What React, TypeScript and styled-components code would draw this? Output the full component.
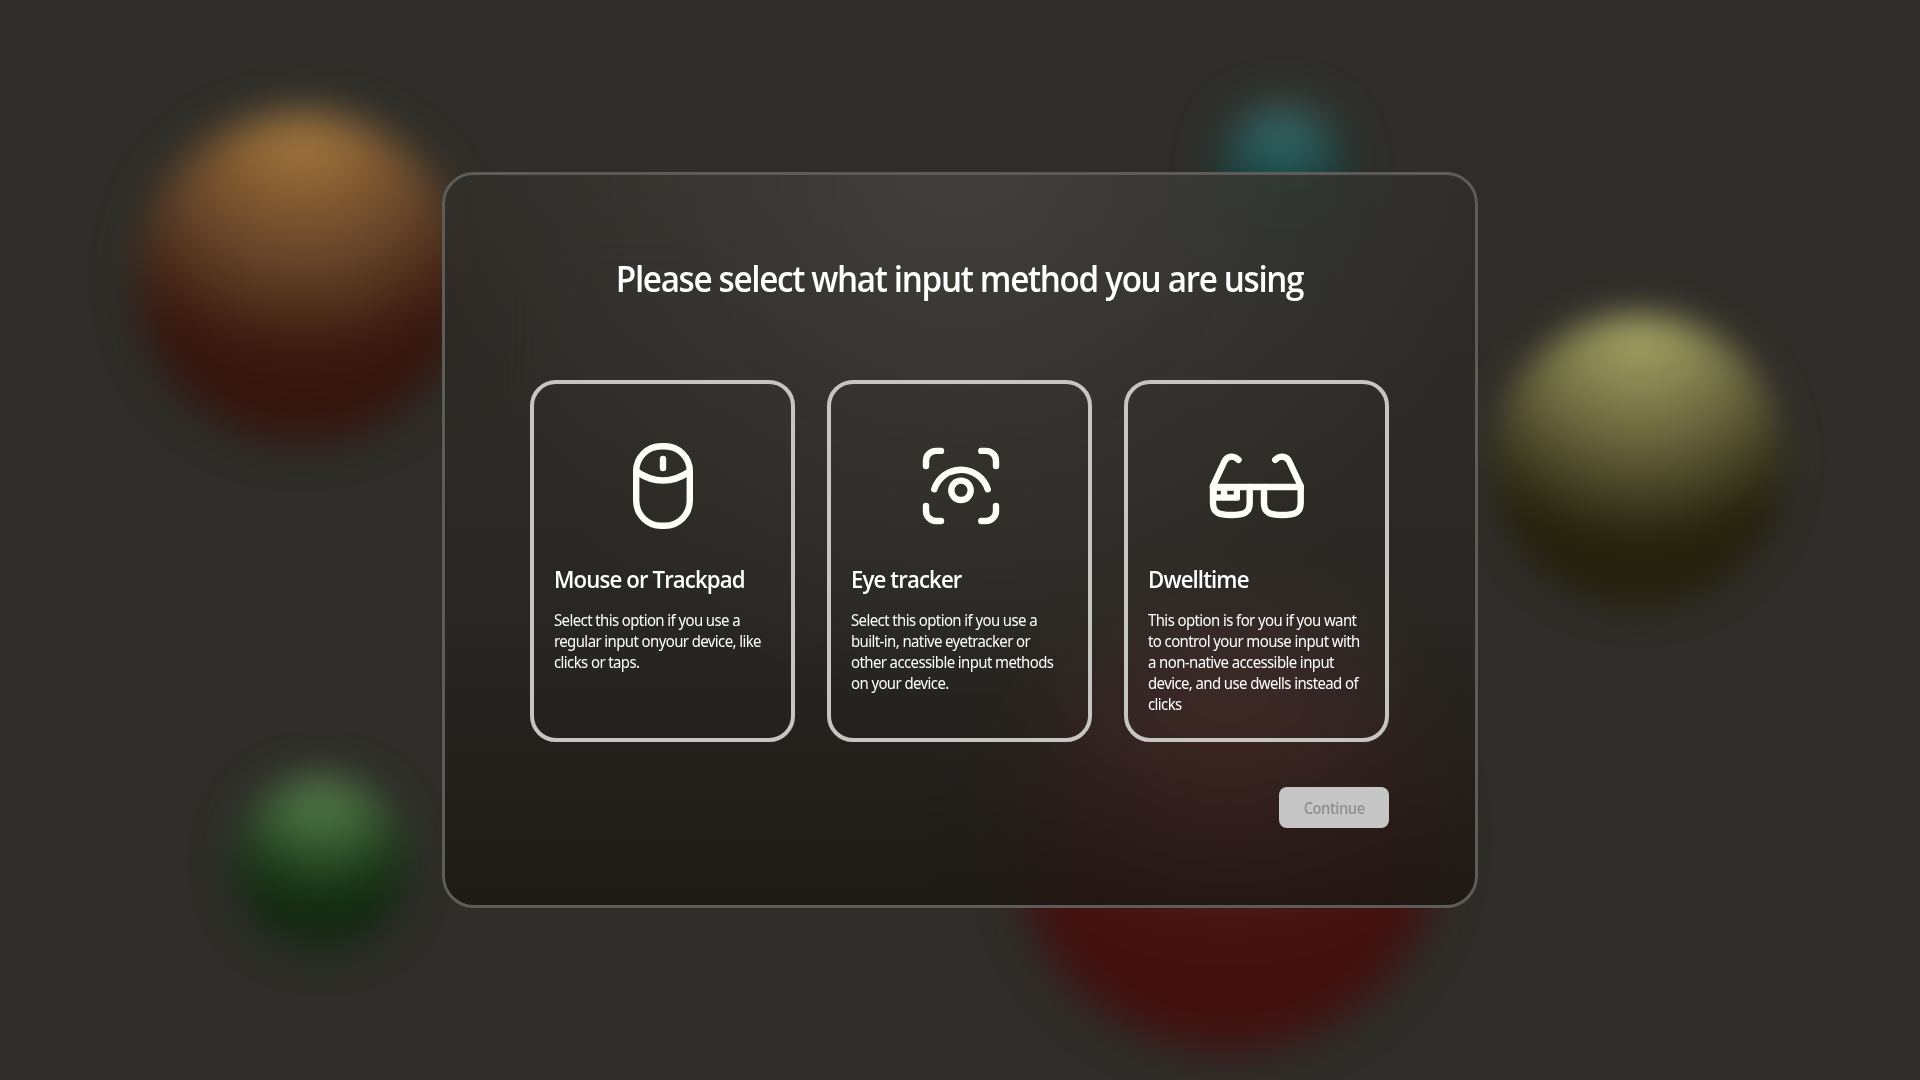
import React from "react";
import styled, { createGlobalStyle } from "styled-components";

const GlobalStyle = createGlobalStyle`
  *, *::before, *::after { box-sizing: border-box; }
  body {
    margin: 0;
    background: #2e2d29;
    font-family: "Open Sans", "Noto Sans", sans-serif;
    color: #fff;
  }
`;

const Screen = styled.main`
  position: relative;
  display: flex;
  justify-content: center;
  align-items: center;
  width: 100%;
  height: 1080px;
  overflow: hidden;
  background: #2e2d29;
`;

const Orb = styled.div<{ $x: number; $y: number; $r: number; $blur: number; $stops: string }>`
  position: absolute;
  left: ${(p) => p.$x - p.$r}px;
  top: ${(p) => p.$y - p.$r}px;
  width: ${(p) => p.$r * 2}px;
  height: ${(p) => p.$r * 2}px;
  border-radius: 50%;
  background: radial-gradient(circle farthest-side at 50% 0%, ${(p) => p.$stops});
  filter: blur(${(p) => p.$blur}px);
`;

const Dialog = styled.section`
  position: relative;
  display: flex;
  flex-direction: column;
  width: 1036px;
  height: 736px;
  padding: 74px 86px 0 85px;
  border: 3px solid #5d5c58;
  border-radius: 32px;
  background:
    radial-gradient(circle 530px at 50% 0, rgba(255, 255, 255, 0.085), rgba(255, 255, 255, 0)),
    linear-gradient(rgba(47, 46, 42, 0.75), rgba(38, 37, 33, 0.75) 60%, rgba(23, 22, 17, 0.75));
  backdrop-filter: blur(55px);
`;

const Title = styled.h1`
  margin: 0;
  height: 60px;
  font-size: 36px;
  line-height: 60px;
  font-weight: 600;
  letter-spacing: -1.44px;
  text-align: center;
  white-space: nowrap;
  transform: scaleX(0.923);
`;

const Options = styled.div`
  display: flex;
  gap: 32px;
  margin-top: 71px;
`;

const Card = styled.button`
  display: flex;
  flex-direction: column;
  align-items: flex-start;
  width: 265px;
  height: 362px;
  padding: 54px 0 0 20px;
  border: 4px solid #c6c5c1;
  border-radius: 26px;
  background: transparent;
  color: #fff;
  font-family: inherit;
  text-align: left;
`;

const Icon = styled.svg`
  display: block;
  align-self: center;
  margin-left: -20px;
  flex: none;
  fill: none;
  stroke: #fefef9;
  stroke-width: 6.4;
  stroke-linecap: round;
  stroke-linejoin: round;
`;

const CardTitle = styled.span`
  margin-top: 27px;
  font-size: 24px;
  line-height: 36px;
  font-weight: 600;
  letter-spacing: -0.96px;
  transform: scaleX(0.926);
  transform-origin: left center;
`;

const CardText = styled.span`
  margin-top: 13px;
  font-family: "Noto Sans", "Open Sans", sans-serif;
  font-size: 16px;
  line-height: 21px;
  font-weight: 400;
  letter-spacing: -0.64px;
  white-space: pre;
  transform: scaleX(0.935);
  transform-origin: left center;
`;

const Continue = styled.button`
  align-self: flex-end;
  width: 110px;
  height: 41px;
  margin-top: 45px;
  padding: 0;
  border: 0;
  border-radius: 8px;
  background: #c6c6c6;
  color: #8f8f8f;
  font-family: inherit;
  font-size: 16px;
  font-weight: 600;
  letter-spacing: -0.5px;
`;

const ContinueLabel = styled.span`
  display: inline-block;
  transform: scaleX(0.92);
`;

const MouseIcon = () => (
  <Icon width="97" height="96" viewBox="0 0 97 96">
    <rect x="22.2" y="8.2" width="53.6" height="79.6" rx="25" />
    <path d="M22.5 33.5Q49 51.7 75.5 33.5" />
    <path d="M49 21v9" />
  </Icon>
);

const EyeIcon = () => (
  <Icon width="97" height="96" viewBox="0 0 97 96">
    <path d="M15 28V23A10 10 0 0 1 25 12.9H30" />
    <path d="M70.3 12.9H75A10 10 0 0 1 85 23V28" />
    <path d="M15 68V73A10 10 0 0 0 25 83H30" />
    <path d="M70.3 83H75A10 10 0 0 0 85 73V68" />
    <path d="M23.3 51.3A28 28 0 0 1 76.7 51.3" />
    <circle cx="50" cy="52.3" r="9.7" />
  </Icon>
);

const GlassesIcon = () => (
  <Icon width="97" height="96" viewBox="0 0 97 96">
    <path d="M5 49H92.7" />
    <path d="M5 48L16.4 23.5C19.2 17.6 25.5 17.2 30.5 21.8" />
    <path d="M92.7 48L81.3 23.5C78.5 17.6 72.2 17.2 67.2 21.8" />
    <path d="M5 49V65C5 75 11 77 23.3 77S41.7 75 41.7 65V49" />
    <path d="M56 49V65C56 75 62 77 74.3 77S92.7 75 92.7 65V49" />
    <path
      d="M5 49H32V60.7Q32 62.7 30 62.7H5ZM8.8 52.7V56.4H12.8V52.7ZM19.3 52.7V56.4H25.7V52.7Z"
      fill="#fefef9"
      fillRule="evenodd"
      stroke="none"
    />
  </Icon>
);

const orbs = [
  { x: 302, y: 278, r: 165, blur: 21, stops: "#a77c41 0%, #996f3b 14%, #7d562e 30%, #66452a 45%, #4e2d1a 60%, #35150e 76%, #35150e 100%" },
  { x: 1282, y: 168, r: 60, blur: 23, stops: "#3c7372 0%, #2f6261 38%, #174544 62%, #0e3131 100%" },
  { x: 1639, y: 461, r: 146, blur: 17, stops: "#a8a868 0%, #9b995d 13%, #716f43 38%, #5b5432 51%, #404023 62%, #25210d 78%, #25210d 100%" },
  { x: 321, y: 863, r: 86, blur: 20, stops: "#56814e 0%, #4c7243 22%, #35582f 42%, #193717 62%, #122910 78%, #122910 100%" },
  { x: 1228, y: 837, r: 213, blur: 22, stops: "#a85454 0%, #8c4242 30%, #642828 50%, #471515 68%, #42100f 78%, #42100f 100%" },
];

const options = [
  {
    icon: <MouseIcon />,
    title: "Mouse or Trackpad",
    text: "Select this option if you use a\nregular input onyour device, like\nclicks or taps.",
  },
  {
    icon: <EyeIcon />,
    title: "Eye tracker",
    text: "Select this option if you use a\nbuilt-in, native eyetracker or\nother accessible input methods\non your device.",
  },
  {
    icon: <GlassesIcon />,
    title: "Dwelltime",
    text: "This option is for you if you want\nto control your mouse input with\na non-native accessible input\ndevice, and use dwells instead of\nclicks",
  },
];

export default function App() {
  return (
    <>
      <GlobalStyle />
      <Screen>
        {orbs.map((o) => (
          <Orb key={o.x} $x={o.x} $y={o.y} $r={o.r} $blur={o.blur} $stops={o.stops} />
        ))}
        <Dialog>
          <Title>Please select what input method you are using</Title>
          <Options>
            {options.map((o) => (
              <Card key={o.title}>
                {o.icon}
                <CardTitle>{o.title}</CardTitle>
                <CardText>{o.text}</CardText>
              </Card>
            ))}
          </Options>
          <Continue disabled>
            <ContinueLabel>Continue</ContinueLabel>
          </Continue>
        </Dialog>
      </Screen>
    </>
  );
}
